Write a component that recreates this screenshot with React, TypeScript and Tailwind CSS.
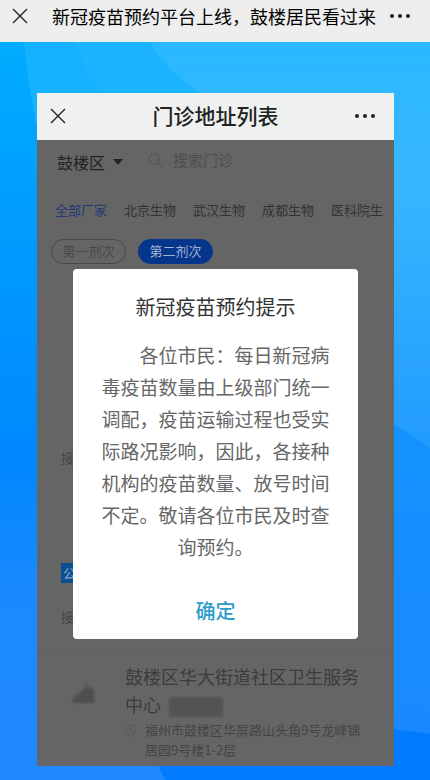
import React from 'react';

const fabricants = ['全部厂家', '北京生物', '武汉生物', '成都生物', '医科院生'];

const Croix = () => (
    <svg className="size-4" viewBox="0 0 16 16" fill="none" stroke="currentColor" strokeWidth="1.4">
        <path d="M1 1L15 15M15 1L1 15" />
    </svg>
);

const Points = () => (
    <svg className="h-4 w-5" viewBox="0 0 20 16" fill="currentColor">
        <circle cx="2" cy="8" r="2" />
        <circle cx="10" cy="8" r="2" />
        <circle cx="18" cy="8" r="2" />
    </svg>
);

const Fond = () => (
    <svg className="absolute inset-0 size-full" viewBox="0 0 430 738" preserveAspectRatio="none" aria-hidden="true">
        <defs>
            <linearGradient id="base" x1="0" y1="0" x2="0" y2="1">
                <stop offset="0" stopColor="#00acff" />
                <stop offset="0.2" stopColor="#009fff" />
                <stop offset="0.56" stopColor="#0088ff" />
                <stop offset="0.75" stopColor="#1a89ff" />
                <stop offset="1" stopColor="#2189ff" />
            </linearGradient>
            <linearGradient id="clair" x1="0" y1="0" x2="0" y2="1">
                <stop offset="0" stopColor="#29b9ff" />
                <stop offset="0.35" stopColor="#38b6ff" />
                <stop offset="1" stopColor="#229bff" />
            </linearGradient>
            <linearGradient id="bas" x1="0" y1="0" x2="0" y2="1">
                <stop offset="0" stopColor="#1293ff" />
                <stop offset="1" stopColor="#1b87ff" />
            </linearGradient>
        </defs>
        <rect width="430" height="738" fill="url(#base)" />
        <path d="M24 0Q28 45 40 100H430V0Z" fill="#16b2ff" />
        <path d="M75 0C85 25 90 40 105 55H300V0Z" fill="#1cb4ff" />
        <path d="M150 0C165 25 185 40 205 55L300 406H430V0Z" fill="url(#clair)" />
        <path d="M360 365Q395 380 430 406V738H360Z" fill="url(#bas)" />
        <path d="M166 738Q160 730 156 715L350 686Q395 686 430 692V738Z" fill="#007bff" />
    </svg>
);

const Dialogue = () => (
    <div role="dialog" aria-labelledby="titre-dialogue" className="absolute inset-x-9 top-[129px] rounded-sm bg-white px-7 pt-5 pb-2 text-center">
        <h2 id="titre-dialogue" className="text-[20px] leading-9 text-[#333]">新冠疫苗预约提示</h2>
        <p className="mt-3.5 indent-[38px] text-[19px] leading-8 text-[#666]">
            各位市民：每日新冠病毒疫苗数量由上级部门统一调配，疫苗运输过程也受实际路况影响，因此，各接种机构的疫苗数量、放号时间不定。敬请各位市民及时查询预约。
        </p>
        <button type="button" className="mt-7 h-10 w-full text-[20px] font-medium text-[#2b9ccb]">确定</button>
    </div>
);

export default function App() {
    return (
        <div className="flex min-h-screen flex-col bg-[#0090ff] font-['Noto_Sans_CJK_SC',sans-serif]">
            <header className="flex h-[42px] items-center bg-[#eee] px-3 pb-2.5 text-[#222]">
                <button type="button" aria-label="关闭"><Croix /></button>
                <h1 className="ml-6 flex-1 text-[18px] whitespace-nowrap text-black">新冠疫苗预约平台上线，鼓楼居民看过来</h1>
                <button type="button" aria-label="更多" className="mr-2"><Points /></button>
            </header>

            <main className="relative flex flex-1 flex-col pt-[51px] pr-9 pb-3.5 pl-[37px]">
                <Fond />
                <section className="relative flex flex-1 flex-col">
                    <div className="flex h-[47px] items-center bg-[#eff1f1] pr-[19px] pb-0.5 pl-[13px] text-[#222]">
                        <button type="button" aria-label="关闭"><Croix /></button>
                        <h2 className="flex-1 pl-2.5 text-center text-[21px] font-medium">门诊地址列表</h2>
                        <button type="button" aria-label="更多"><Points /></button>
                    </div>

                    <div className="relative flex-1 bg-[#656565] pb-1">
                        <div className="flex h-11 items-center pl-5">
                            <button type="button" className="flex items-center gap-2 text-[16px] text-[#222]">
                                鼓楼区
                                <svg className="h-[6px] w-[10px]" viewBox="0 0 10 6" fill="currentColor"><path d="M0 0H10L5 6Z" /></svg>
                            </button>
                            <label className="ml-6 flex min-w-0 flex-1 items-center gap-2 pb-1 text-[#505050]">
                                <svg className="size-4 shrink-0 text-[#595959]" viewBox="0 0 16 16" fill="none" stroke="currentColor" strokeWidth="1.5">
                                    <circle cx="7" cy="7" r="5" />
                                    <path d="M11 11L15 15" />
                                </svg>
                                <input type="search" aria-label="搜索门诊" placeholder="搜索门诊" className="w-full min-w-0 bg-transparent pl-0.5 text-[15px] placeholder:text-[#4e4e4e]" />
                            </label>
                        </div>

                        <nav className="flex h-[55px] items-center gap-[17px] overflow-hidden pb-1 pl-[18px] text-[13px] whitespace-nowrap text-[#333]">
                            {fabricants.map((f, i) => (
                                <button type="button" key={f} className={i === 0 ? 'text-[#203a76]' : ''}>{f}</button>
                            ))}
                        </nav>

                        <div className="flex gap-3 pl-3.5 text-[13px]">
                            <button type="button" className="h-[25px] w-[75px] rounded-full border border-[#484848] pb-0.5 text-[#484848]">第一剂次</button>
                            <button type="button" className="h-[25px] w-[75px] rounded-full bg-[#06358c] pb-0.5 text-[#a4b4d2]">第二剂次</button>
                        </div>

                        <div className="mt-9 pl-6 text-[13px] text-[#444]">
                            <p className="w-4 pt-[148px] leading-5">接</p>
                            <p className="mt-[95px] w-4 bg-[#0b4f93] pl-0.5 leading-5 text-[#8fa9c4]">公</p>
                            <p className="mt-6 w-4 leading-5">接</p>
                        </div>

                        <article className="mt-6 flex border-t border-[#5f5f5f] pt-2">
                            <svg className="mt-4 ml-8 h-8 w-8 shrink-0 text-[#4f4f4f] blur-[1px]" viewBox="0 0 32 32" fill="currentColor">
                                <path d="M3 27L5 21L11 17L14 13L19 11L25 13V27Z" />
                                <path d="M15 13L17 3L19 12Z" fillOpacity="0.4" />
                            </svg>
                            <div className="ml-6 min-w-0 flex-1 text-[#3c3c3c]">
                                <h3 className="pt-0.5 pr-8 text-[18px] leading-7">
                                    鼓楼区华大街道社区卫生服务中心
                                    <span className="ml-2 inline-block h-5 w-[54px] rounded-sm bg-[#545454] align-middle blur-[1px]" />
                                </h3>
                                <p className="mt-0.5 flex gap-2 pr-7 text-[13px] leading-5 text-[#444]">
                                    <svg className="mt-1 h-3.5 w-3 shrink-0 text-[#585858]" viewBox="0 0 12 14" fill="none" stroke="currentColor">
                                        <path d="M6 13C3 9 1 7 1 5a5 4 0 0 1 10 0C11 7 9 9 6 13Z" />
                                        <circle cx="6" cy="5" r="1.5" />
                                    </svg>
                                    福州市鼓楼区华屏路山头角9号龙峰锦居园9号楼1-2层
                                </p>
                            </div>
                        </article>

                        <Dialogue />
                    </div>
                </section>
            </main>
        </div>
    );
}
